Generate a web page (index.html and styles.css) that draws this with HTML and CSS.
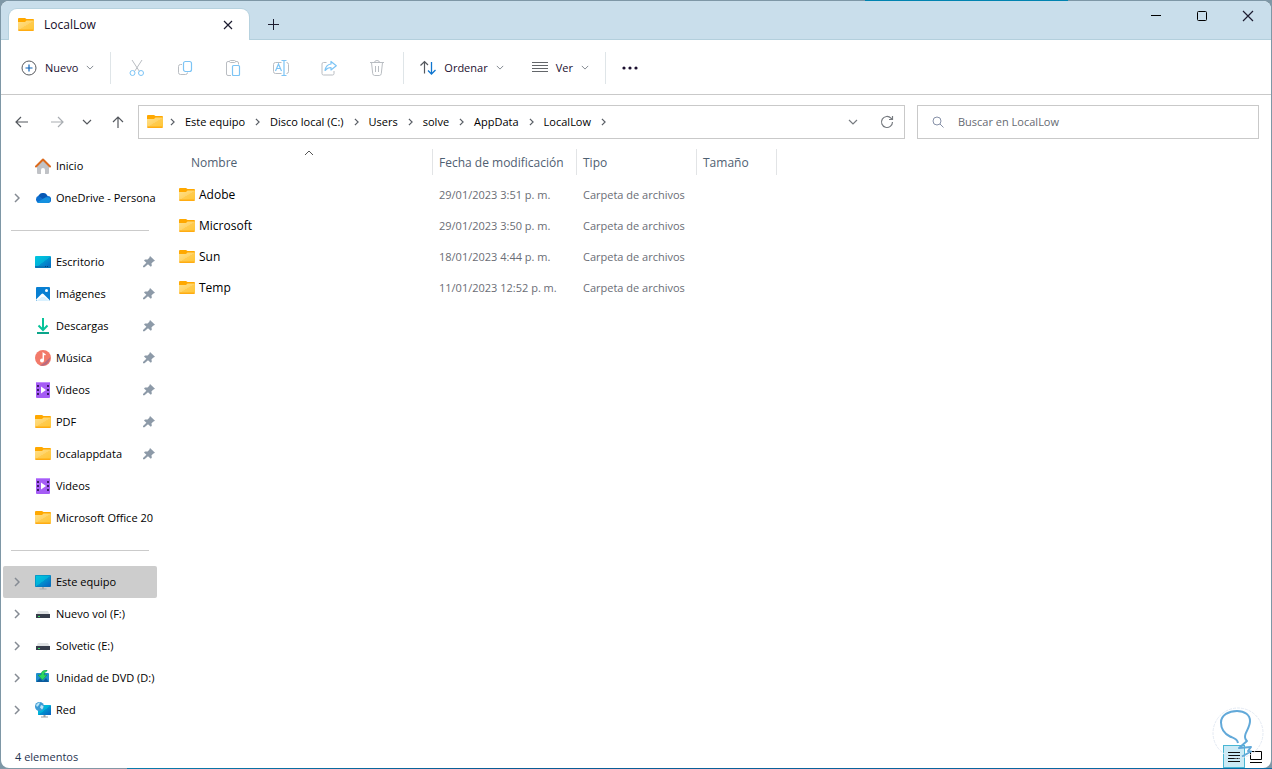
FILE: index.html
```html
<!DOCTYPE html>
<html lang="es">
<head>
  <meta charset="UTF-8">
  <meta name="viewport" content="width=device-width, initial-scale=1.0">
  <title>LocalLow</title>
  <link rel="stylesheet" href="styles.css">
</head>
<body>

  <!-- Shared icons -->
  <svg class="sprite" aria-hidden="true">
    <defs>
      <linearGradient id="g-folder" x1="0" y1="0" x2="1" y2="1">
        <stop offset="0" stop-color="#ffe08a"/><stop offset=".5" stop-color="#ffd468"/><stop offset=".52" stop-color="#ffcb50"/><stop offset="1" stop-color="#ffc736"/>
      </linearGradient>
      <linearGradient id="g-screen" x1="0" y1="0" x2="1" y2="1">
        <stop offset="0" stop-color="#00c8e0"/><stop offset=".5" stop-color="#00b0d8"/><stop offset=".52" stop-color="#0092cf"/><stop offset="1" stop-color="#0a5fc0"/>
      </linearGradient>
      <symbol id="folder" viewBox="0 0 16 16">
        <path d="M0 2q0-1 1-1h6l1.500 1h6.500q1 0 1 1V7H0z" fill="#ffa800"/>
        <path d="M0 5h7l1.500-1.500H16V12q0 1-1 1H1q-1 0-1-1z" fill="url(#g-folder)"/>
        <path d="M0 12.500h16q0 1.500-1 1.500H1q-1 0-1-1.500z" fill="#ffac12"/>
      </symbol>
      <symbol id="chev-right" viewBox="0 0 6 10">
        <path d="M1 1l4 4-4 4" fill="none" stroke="currentColor" stroke-width="1.500"/>
      </symbol>
      <symbol id="chev-down" viewBox="0 0 10 6">
        <path d="M1 1l4 4 4-4" fill="none" stroke="currentColor" stroke-width="1.200"/>
      </symbol>
      <symbol id="pin" viewBox="0 0 12 12">
        <path d="M7 0l5 4.800-1.500.7-2 1.700.3 2.600-1 1L5 8.200 1.500 11.200H0V10L3.400 6.800 1 4.400l1-1 2.600.2L6.300 1.700z" fill="#8d9aa8"/>
      </symbol>
      <symbol id="video" viewBox="0 0 16 16">
        <rect x="1" width="14" height="16" rx="1" fill="#a55cf5"/>
        <path d="M1 1q0-1 1-1h12q1 0 1 1z" fill="#c18bff"/>
        <path d="M2 3h2v2H2zM2 7h2v2H2zM2 11h2v2H2zM12 3h2v2h-2zM12 7h2v2h-2zM12 11h2v2h-2z" fill="#3c1c66"/>
        <path d="M6 4.500v7l5-3.500z" fill="#fff"/>
      </symbol>
      <symbol id="drive" viewBox="0 0 16 16">
        <path d="M3 5h10l2 4H1z" fill="#dfe2e4"/>
        <rect x="1" y="8" width="14" height="4" fill="#363c4a"/>
        <rect x="3" y="10" width="2" height="1" fill="#3fe06a"/>
      </symbol>
    </defs>
  </svg>

  <div class="window">

    <!-- Title bar -->
    <header class="titlebar">
      <div class="tab">
        <svg class="icon"><use href="#folder"/></svg>
        <span class="tab-title">LocalLow</span>
        <button class="tab-close" aria-label="Cerrar pestaña">
          <svg width="10" height="10" viewBox="0 0 10 10"><path d="M1 1l8 8M9 1L1 9" stroke="#1c1c30" stroke-width="1.200"/></svg>
        </button>
      </div>
      <button class="tab-add" aria-label="Nueva pestaña">
        <svg width="11" height="11" viewBox="0 0 11 11"><path d="M5.500 0v11M0 5.500h11" stroke="#1c1c30"/></svg>
      </button>
      <div class="caption">
        <button aria-label="Minimizar"><svg width="12" height="12" viewBox="0 0 12 12"><path d="M1 5.500h10" stroke="#000"/></svg></button>
        <button aria-label="Maximizar"><svg width="12" height="12" viewBox="0 0 12 12"><rect x="1.500" y="1.500" width="9" height="9" rx="1" fill="none" stroke="#000"/></svg></button>
        <button aria-label="Cerrar"><svg width="12" height="12" viewBox="0 0 12 12"><path d="M1 1l10 10M11 1L1 11" stroke="#1c1c30" stroke-width="1.200"/></svg></button>
      </div>
    </header>

    <!-- Command bar -->
    <div class="toolbar">
      <button class="cmd">
        <svg class="icon" viewBox="0 0 16 16"><circle cx="8" cy="8" r="7" fill="none" stroke="#56595e"/><path d="M8 4.500v7M4.500 8h7" stroke="#0f62b5" stroke-width="1.200"/></svg>
        Nuevo
        <svg class="caret"><use href="#chev-down"/></svg>
      </button>
      <div class="tools">
        <button class="tool" aria-label="Cortar">
          <svg viewBox="0 0 16 16"><path d="M3 0l7.500 11.500M13 0L5.500 11.500" stroke="#b9bdc2"/><circle cx="3.500" cy="13" r="2.500" stroke="#7cc4f5"/><circle cx="12" cy="13" r="2.500" stroke="#7cc4f5"/></svg>
        </button>
        <button class="tool" aria-label="Copiar">
          <svg viewBox="0 0 16 16"><path d="M5 4.500H3.500q-2 0-2 2v6q0 2 2 2h5q2 0 2-2" stroke="#b9bdc2"/><rect x="6.500" y="1.500" width="8" height="10" rx="2" stroke="#7cc4f5" stroke-width="1.200"/></svg>
        </button>
        <button class="tool" aria-label="Pegar">
          <svg viewBox="0 0 16 16"><path d="M6 15.500H3q-1.500 0-1.500-1.500V3Q1.500 1.500 3 1.500h1.500q0-1 1-1h4q1 0 1 1H12q1.500 0 1.500 1.500v1.500M4.500 1.500q0 1 1 1h4q1 0 1-1" stroke="#b9bdc2"/><rect x="7.500" y="5.500" width="7" height="10" rx="1" stroke="#7cc4f5" stroke-width="1.200"/></svg>
        </button>
        <button class="tool" aria-label="Cambiar nombre">
          <svg viewBox="0 0 16 16"><path d="M8.500 13.500H2.500q-2 0-2-2v-7q0-2 2-2h6M13.500 2.500q2 0 2 2v7q0 2-2 2" stroke="#b9bdc2"/><path d="M11 .5v15M8.500.5h5M8.500 15.500h5M2.500 11l3-7 3 7M3.500 8.500h4" stroke="#7cc4f5" stroke-width="1.200"/></svg>
        </button>
        <button class="tool" aria-label="Compartir">
          <svg viewBox="0 0 16 16"><path d="M5.500 2.500h-3q-1.500 0-1.500 1.500v9.500q0 1.500 1.500 1.500h9q1.500 0 1.500-1.500V11" stroke="#b9bdc2"/><path d="M10 1.500v2.500q-5 .5-6 6.500 2.500-3 6-3V10l5.300-4.200z" stroke="#7cc4f5" stroke-width="1.200" stroke-linejoin="round"/></svg>
        </button>
        <button class="tool" aria-label="Eliminar">
          <svg viewBox="0 0 16 16"><path d="M1 2.500h14M5.500 2.500q0-2 2.500-2t2.500 2M2.500 2.500l1.200 11q.2 2 2 2h4.600q1.800 0 2-2l1.200-11M6.500 6v6M9.500 6v6" stroke="#b9bdc2"/></svg>
        </button>
      </div>
      <div class="views">
        <button class="cmd">
          <svg class="icon" viewBox="0 0 16 16" fill="none"><path d="M4.500 13.500v-12M.5 5.500l4-4 3.500 3.500" stroke="#56595e" stroke-width="1.200"/><path d="M11.500 2v12M8 10.500l3.500 3.500 4-4" stroke="#0f76d0" stroke-width="1.300"/></svg>
          Ordenar
          <svg class="caret"><use href="#chev-down"/></svg>
        </button>
        <button class="cmd">
          <svg class="icon" viewBox="0 0 16 16"><path d="M0 2.500h16M0 5.500h16M0 8.500h16M0 11.500h16" stroke="#63666a"/></svg>
          Ver
          <svg class="caret"><use href="#chev-down"/></svg>
        </button>
      </div>
      <button class="more" aria-label="Ver más">
        <svg width="16" height="4" viewBox="0 0 16 4" fill="#1c1030"><circle cx="2" cy="2" r="1.600"/><circle cx="8" cy="2" r="1.600"/><circle cx="14" cy="2" r="1.600"/></svg>
      </button>
    </div>

    <!-- Navigation and address -->
    <div class="navbar">
      <div class="nav-buttons">
        <button aria-label="Atrás"><svg width="14" height="12" viewBox="0 0 14 12"><path d="M13 6H1M6 1L1 6l5 5"/></svg></button>
        <button class="off" aria-label="Adelante"><svg width="14" height="12" viewBox="0 0 14 12"><path d="M1 6h12M8 1l5 5-5 5"/></svg></button>
        <button class="recent" aria-label="Recientes"><svg width="10" height="6" viewBox="0 0 10 6"><path d="M1 1l4 4 4-4"/></svg></button>
        <button aria-label="Arriba"><svg width="12" height="14" viewBox="0 0 12 14"><path d="M6 13V2M1 7l5-5 5 5"/></svg></button>
      </div>
      <nav class="address" aria-label="Ruta">
        <svg class="icon"><use href="#folder"/></svg>
        <svg class="step"><use href="#chev-right"/></svg>
        <a href="#">Este equipo</a>
        <svg class="step"><use href="#chev-right"/></svg>
        <a href="#">Disco local (C:)</a>
        <svg class="step"><use href="#chev-right"/></svg>
        <a href="#">Users</a>
        <svg class="step"><use href="#chev-right"/></svg>
        <a href="#">solve</a>
        <svg class="step"><use href="#chev-right"/></svg>
        <a href="#">AppData</a>
        <svg class="step"><use href="#chev-right"/></svg>
        <a href="#">LocalLow</a>
        <svg class="step"><use href="#chev-right"/></svg>
        <div class="address-end">
          <button aria-label="Ubicaciones anteriores"><svg width="10" height="6"><use href="#chev-down"/></svg></button>
          <button aria-label="Actualizar"><svg width="14" height="14" viewBox="0 0 14 14" fill="none" stroke="#777b80" stroke-width="1.200"><path d="M12.500 7A5.500 5.500 0 1 1 11 3.200L12.500 4.500M12.500 1v3.500H9"/></svg></button>
        </div>
      </nav>
      <label class="search">
        <svg width="12" height="12" viewBox="0 0 12 12" fill="none" stroke="#8791a8"><circle cx="5" cy="5" r="4"/><path d="M8 8l3.500 3.500"/></svg>
        <input type="text" placeholder="Buscar en LocalLow" aria-label="Buscar en LocalLow">
      </label>
    </div>

    <div class="content">

      <!-- Sidebar -->
      <nav class="sidebar" aria-label="Panel de navegación">
        <a class="item" href="#">
          <svg class="icon" viewBox="0 0 16 16"><path d="M2 7l6-5 6 5v8q0 1-1 1H10v-4q0-2-2-2t-2 2v4H3q-1 0-1-1z" fill="#c0c2c6"/><path d="M1 8.500l7-7 7 7" fill="none" stroke="#dc6a1c" stroke-width="2" stroke-linecap="round" stroke-linejoin="round"/></svg>
          <span>Inicio</span>
        </a>
        <a class="item" href="#">
          <svg class="expand"><use href="#chev-right"/></svg>
          <svg class="icon" viewBox="0 0 16 16"><path d="M4 13a3.800 3.800 0 0 1-.5-7.300A5 5 0 0 1 12.500 6 3.500 3.500 0 0 1 13 13z" fill="#0c6fd0"/><path d="M3.500 5.700A5 5 0 0 1 12.500 6L8 9z" fill="#0757b4"/><path d="M2 12.500L9.500 8q3-1.500 5.500.2A3.500 3.500 0 0 1 13 13H4q-1 0-2-.5z" fill="#1490df"/></svg>
          <span>OneDrive - Persona</span>
        </a>
        <hr>
        <a class="item" href="#">
          <svg class="icon" viewBox="0 0 16 16"><rect y="2" width="16" height="12" rx="1" fill="url(#g-screen)"/><path d="M0 12h16v1q0 1-1 1H1q-1 0-1-1z" fill="#0875b8"/><path d="M10 12.500h4" stroke="#073c80" stroke-dasharray="1 1"/></svg>
          <span>Escritorio</span><svg class="pin"><use href="#pin"/></svg>
        </a>
        <a class="item" href="#">
          <svg class="icon" viewBox="0 0 16 16"><rect x="1" y="1" width="14" height="14" rx="1" fill="#087fd2"/><path d="M1 13.500L6.500 8q1-1 2 0l6.500 6.500-1 .5H2z" fill="#fff"/><path d="M1.500 15l5-4h3l5 4z" fill="#d9f1ff"/><circle cx="11.500" cy="4.500" r="1.500" fill="#fff"/></svg>
          <span>Imágenes</span><svg class="pin"><use href="#pin"/></svg>
        </a>
        <a class="item" href="#">
          <svg class="icon" viewBox="0 0 16 16"><path d="M8 0v12M3.500 7.500L8 12l4.500-4.500" fill="none" stroke="#08c39a" stroke-width="2"/><path d="M2 15h12" stroke="#0ba58a" stroke-width="2"/></svg>
          <span>Descargas</span><svg class="pin"><use href="#pin"/></svg>
        </a>
        <a class="item" href="#">
          <svg class="icon" viewBox="0 0 16 16"><circle cx="8" cy="8" r="8" fill="#f27a6a"/><path d="M9 13l6-5.500A8 8 0 0 1 5 15.400z" fill="#b86a80"/><circle cx="7" cy="10.500" r="2" fill="#fff"/><path d="M8.300 10.500V3.500l2.200 1.500" fill="none" stroke="#fff" stroke-width="1.500"/></svg>
          <span>Música</span><svg class="pin"><use href="#pin"/></svg>
        </a>
        <a class="item" href="#">
          <svg class="icon"><use href="#video"/></svg>
          <span>Videos</span><svg class="pin"><use href="#pin"/></svg>
        </a>
        <a class="item" href="#">
          <svg class="icon"><use href="#folder"/></svg>
          <span>PDF</span><svg class="pin"><use href="#pin"/></svg>
        </a>
        <a class="item" href="#">
          <svg class="icon"><use href="#folder"/></svg>
          <span>localappdata</span><svg class="pin"><use href="#pin"/></svg>
        </a>
        <a class="item" href="#">
          <svg class="icon"><use href="#video"/></svg>
          <span>Videos</span>
        </a>
        <a class="item" href="#">
          <svg class="icon"><use href="#folder"/></svg>
          <span>Microsoft Office 20</span>
        </a>
        <hr>
        <a class="item selected" href="#">
          <svg class="expand"><use href="#chev-right"/></svg>
          <svg class="icon" viewBox="0 0 16 16"><rect y="1" width="16" height="12" rx="1" fill="#0876b4"/><rect x=".5" y="1.500" width="15" height="11" rx=".5" fill="url(#g-screen)"/><path d="M7 13h2v1.500H7zM4.500 14.500h7v1h-7z" fill="#a6abb0"/></svg>
          <span>Este equipo</span>
        </a>
        <a class="item" href="#">
          <svg class="expand"><use href="#chev-right"/></svg>
          <svg class="icon"><use href="#drive"/></svg>
          <span>Nuevo vol (F:)</span>
        </a>
        <a class="item" href="#">
          <svg class="expand"><use href="#chev-right"/></svg>
          <svg class="icon"><use href="#drive"/></svg>
          <span>Solvetic (E:)</span>
        </a>
        <a class="item" href="#">
          <svg class="expand"><use href="#chev-right"/></svg>
          <svg class="icon" viewBox="0 0 16 16"><rect x="1" y="3" width="13" height="9" rx="1" fill="#1f8fd0"/><path d="M1 12l4-4 3 3 3-3 3 4z" fill="#0a5a9c"/><path d="M12 0Q6 0 6 5H3l4.500 5L12 5H9Q9 2 12 1z" fill="#2ad860" stroke="#128a3c" stroke-width=".5"/></svg>
          <span>Unidad de DVD (D:)</span>
        </a>
        <a class="item" href="#">
          <svg class="expand"><use href="#chev-right"/></svg>
          <svg class="icon" viewBox="0 0 16 16"><rect x="3" y="3" width="13" height="10" rx=".5" fill="url(#g-screen)"/><path d="M8.500 13h2v1.500h-2zM6 14.500h7v1H6z" fill="#9aa0a6"/><circle cx="4.500" cy="4.500" r="4.500" fill="#3b9ad4"/><path d="M1 3q2-3 4-2.500L4 3 2 5zM6 3l2.500 1q0 2-1.500 3.500L5 5.500z" fill="#b9e4f7"/></svg>
          <span>Red</span>
        </a>
      </nav>

      <!-- File list -->
      <main class="files">
        <table>
          <colgroup>
            <col class="col-name"><col class="col-date"><col class="col-type"><col class="col-size">
          </colgroup>
          <thead>
            <tr>
              <th><div class="head sorted">Nombre<svg class="sort" width="10" height="6" viewBox="0 0 10 6"><path d="M1 5l4-4 4 4" fill="none" stroke="#555"/></svg></div></th>
              <th><div class="head">Fecha de modificación</div></th>
              <th><div class="head">Tipo</div></th>
              <th><div class="head">Tamaño</div></th>
            </tr>
          </thead>
          <tbody>
            <tr><td><div class="file"><svg class="icon"><use href="#folder"/></svg>Adobe</div></td><td>29/01/2023 3:51 p. m.</td><td>Carpeta de archivos</td><td></td></tr>
            <tr><td><div class="file"><svg class="icon"><use href="#folder"/></svg>Microsoft</div></td><td>29/01/2023 3:50 p. m.</td><td>Carpeta de archivos</td><td></td></tr>
            <tr><td><div class="file"><svg class="icon"><use href="#folder"/></svg>Sun</div></td><td>18/01/2023 4:44 p. m.</td><td>Carpeta de archivos</td><td></td></tr>
            <tr><td><div class="file"><svg class="icon"><use href="#folder"/></svg>Temp</div></td><td>11/01/2023 12:52 p. m.</td><td>Carpeta de archivos</td><td></td></tr>
          </tbody>
        </table>
      </main>
    </div>

    <!-- Status bar -->
    <footer class="statusbar">
      <span>4 elementos</span>
      <div class="modes">
        <button class="mode active" aria-label="Detalles"><svg width="12" height="12" viewBox="0 0 12 12"><path d="M0 1.500h12M0 4.500h12M0 7.500h12M0 10.500h12" stroke="#111"/></svg></button>
        <button class="mode" aria-label="Iconos grandes"><svg width="12" height="12" viewBox="0 0 12 12"><path d="M.5.500h11v8H.5zM0 11.500h12" fill="none" stroke="#000"/></svg></button>
      </div>
    </footer>

    <svg class="watermark" viewBox="0 0 52 52" fill="none" aria-hidden="true">
      <circle cx="26" cy="26" r="25" stroke="#e3e9f2" stroke-dasharray="3 1"/>
      <path d="M26 36C25 31 21 31 18 29.500 13 27 9 22 9 15.500 9 8 17 4 25 4c8 0 13 4 13 10 0 5-3 9-4.500 13-1 3-1 5 1.500 7l-8 7 12-1-3 4 3 .5-9 5" stroke="#62a9d9" stroke-width="2" stroke-linejoin="round"/>
    </svg>
  </div>

</body>
</html>
```
FILE: styles.css
```css
* {
  box-sizing: border-box;
}

body {
  margin: 0;
  height: 100vh;
  padding: 1px;
  display: flex;
  font-family: "Open Sans", "Noto Sans", sans-serif;
  font-size: 11px;
  line-height: 16px;
  color: #000;
  background: linear-gradient(to right, #8298a6 10%, #0a7cab 10%, #0a5c94 40%, #0a6ca5) bottom / 100% 1px no-repeat,
    linear-gradient(to right, #7e97a6 68%, #0083b0 68%, #0083b0 84%, #7e97a6 84%) top / 100% 1px no-repeat,
    #7e97a6;
}

.sprite {
  position: absolute;
  width: 0;
  height: 0;
}

svg {
  flex: none;
  display: block;
}

a {
  color: inherit;
  text-decoration: none;
}

button {
  display: flex;
  align-items: center;
  justify-content: center;
  padding: 0;
  border: none;
  background: none;
  font: inherit;
  color: #1c1030;
}

.icon {
  width: 16px;
  height: 16px;
}

.window {
  position: relative;
  flex: 1;
  display: flex;
  flex-direction: column;
  overflow: hidden;
  border-radius: 8px;
  background: #fff;
}

/* TITLE BAR */
.titlebar {
  display: flex;
  height: 39px;
  padding-left: 8px;
  background: #c9deeb;
  border-bottom: 1px solid #b3cfdc;
}

.tab {
  display: flex;
  align-items: center;
  gap: 10px;
  width: 240px;
  height: 31px;
  margin-top: 8px;
  padding: 0 16px 0 9px;
  border-radius: 8px 8px 0 0;
  background: #fff;
  box-shadow: 0 0 0 1px #b7d2df;
  clip-path: inset(-1px -1px 0 -1px);
}

.tab-title {
  flex: 1;
  font-size: 12px;
  color: #150d28;
}

.tab-add {
  width: 48px;
  margin-top: 8px;
}

.caption {
  display: flex;
  margin-left: auto;
}

.caption button {
  width: 46px;
  height: 29px;
}

/* COMMAND BAR */
.toolbar {
  display: flex;
  align-items: center;
  height: 55px;
  padding: 1px 0 0 20px;
  border-bottom: 1px solid #c9c9c9;
}

.cmd {
  gap: 8px;
  height: 32px;
}

.caret {
  width: 8px;
  height: 5px;
  color: #80868e;
}

.tools,
.views {
  display: flex;
  align-items: center;
  height: 32px;
  border-left: 1px solid #dfe5e8;
}

.tools {
  margin-left: 16px;
  padding: 0 2px;
}

.tool {
  width: 48px;
  height: 32px;
}

.tool svg {
  width: 16px;
  height: 16px;
  fill: none;
}

.views {
  gap: 28px;
  padding: 0 16px;
  border-right: 1px solid #dfe5e8;
}

.more {
  width: 48px;
  height: 32px;
}

/* ADDRESS */
.navbar {
  display: flex;
  align-items: center;
  padding: 10px 12px 10px 3px;
}

.nav-buttons {
  display: flex;
  width: 134px;
}

.nav-buttons button {
  width: 35px;
  height: 34px;
}

.nav-buttons .recent {
  width: 26px;
}

.nav-buttons svg {
  fill: none;
  stroke: #54585e;
  stroke-width: 1.2;
}

.nav-buttons .off svg {
  stroke: #a9adb2;
}

.address {
  flex: 1;
  display: flex;
  align-items: center;
  gap: 10px;
  height: 34px;
  padding-left: 8px;
  border: 1px solid #c9c9c9;
  white-space: nowrap;
}

.address .icon {
  margin-right: -3px;
}

.step {
  width: 5px;
  height: 8px;
  color: #5b6067;
}

.address-end {
  display: flex;
  margin-left: auto;
}

.address-end button {
  width: 34px;
  height: 32px;
  color: #777b80;
}

.search {
  flex: 0 1 342px;
  display: flex;
  align-items: center;
  gap: 14px;
  height: 34px;
  margin-left: 12px;
  padding: 0 14px;
  border: 1px solid #c9c9c9;
}

.search input {
  flex: 1;
  min-width: 0;
  padding: 0;
  border: none;
  outline: none;
  font: inherit;
}

.search input::placeholder {
  color: #666a72;
  opacity: 1;
}

/* SIDEBAR */
.content {
  flex: 1;
  display: flex;
  min-height: 0;
}

.sidebar {
  width: 156px;
  padding: 1px 0 0 2px;
}

.item {
  position: relative;
  display: flex;
  align-items: center;
  gap: 5px;
  height: 32px;
  padding-left: 32px;
  white-space: nowrap;
}

.item span {
  flex: 1;
  min-width: 0;
}

.selected {
  border-radius: 2px;
  background: #cdcdcd;
}

.expand {
  position: absolute;
  left: 11px;
  width: 6px;
  height: 10px;
  color: #858b93;
}

.pin {
  width: 12px;
  height: 12px;
  margin-right: 2px;
}

.sidebar hr {
  height: 1px;
  margin: 16px 8px 15px;
  border: none;
  background: #cbcbcb;
}

/* FILE LIST */
.files {
  flex: 1;
  padding-left: 14px;
}

table {
  border-collapse: collapse;
  table-layout: fixed;
  width: 606px;
}

.col-name {
  width: 262px;
}

.col-date {
  width: 144px;
}

.col-type {
  width: 120px;
}

.col-size {
  width: 80px;
}

th,
td {
  padding: 0;
  text-align: left;
  font-weight: normal;
}

.head {
  position: relative;
  height: 26px;
  margin-bottom: 4px;
  padding: 6px 0 4px 6px;
  border-right: 1px solid #e2e4e6;
  font-size: 12px;
  color: #4f6072;
}

.sorted {
  padding-left: 20px;
}

.sort {
  position: absolute;
  top: 1px;
  left: 51%;
}

td {
  height: 31px;
  padding-left: 6px;
  color: #6a6d75;
  white-space: nowrap;
}

td:first-child {
  padding-left: 8px;
}

.file {
  display: flex;
  align-items: center;
  gap: 4px;
  font-size: 12px;
  color: #000;
}

/* STATUS BAR */
.statusbar {
  display: flex;
  align-items: center;
  justify-content: space-between;
  height: 23px;
  padding: 0 4px 0 14px;
  color: #1f3350;
}

.modes {
  display: flex;
}

.mode {
  width: 22px;
  height: 23px;
}

.active {
  border: 1px solid #48b6d4;
  background: #cbeaf5;
}

.watermark {
  position: absolute;
  right: 7px;
  bottom: 9px;
  width: 52px;
  height: 52px;
  pointer-events: none;
}
```
